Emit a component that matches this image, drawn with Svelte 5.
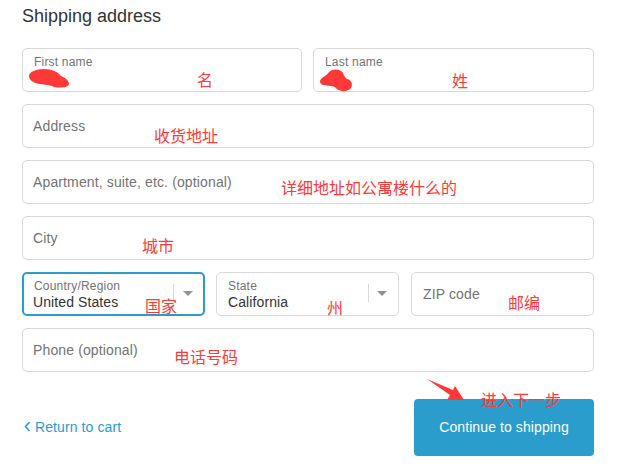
<script>
  const notes = [
    { text: '名', cls: 'n1' },
    { text: '姓', cls: 'n2' },
    { text: '收货地址', cls: 'n3' },
    { text: '详细地址如公寓楼什么的', cls: 'n4' },
    { text: '城市', cls: 'n5' },
    { text: '国家', cls: 'n6' },
    { text: '州', cls: 'n7' },
    { text: '邮编', cls: 'n8' },
    { text: '电话号码', cls: 'n9' },
    { text: '进入下一步', cls: 'n10' }
  ];
</script>

<main class="page">
  <h2>Shipping address</h2>

  <form class="fields">
    <div class="row two">
      <div class="field filled"><span class="label">First name</span></div>
      <div class="field filled"><span class="label">Last name</span></div>
    </div>
    <div class="field"><span class="ph">Address</span></div>
    <div class="field"><span class="ph">Apartment, suite, etc. (optional)</span></div>
    <div class="field"><span class="ph">City</span></div>
    <div class="row three">
      <div class="field select focus">
        <div class="stack"><span class="label">Country/Region</span><span class="value">United States</span></div>
        <span class="sep"></span><span class="caret"></span>
      </div>
      <div class="field select">
        <div class="stack"><span class="label">State</span><span class="value">California</span></div>
        <span class="sep"></span><span class="caret"></span>
      </div>
      <div class="field zip"><span class="ph">ZIP code</span></div>
    </div>
    <div class="field"><span class="ph">Phone (optional)</span></div>
  </form>

  <div class="actions">
    <a class="back" href="#cart">
      <svg width="7" height="11" viewBox="0 0 7 11" aria-hidden="true"><path d="M5.5 1 1.5 5.5 5.5 10" fill="none" stroke="#2a9dcc" stroke-width="1.6"/></svg>
      Return to cart
    </a>
    <button type="button">Continue to shipping</button>
  </div>

  <svg class="ink" width="639" height="467" viewBox="0 0 639 467" aria-hidden="true">
    <path d="M29 76 C29 72 36 69 44 69 C52 69 58 72 61 76 C66 78 69 81 69 84 C68 88 60 88 54 87 C49 84 41 85 35 83 C31 81 29 79 29 76Z" fill="#ff3838"/>
    <path d="M320 81 C321 77 327 76 329 72 C333 68 341 69 343 73 C344 76 345 77 347 79 C352 80 353 85 351 88 C348 92 341 92 337 89 C334 85 328 86 324 85 C321 85 320 83 320 81Z" fill="#ff3838"/>
    <path d="M427 379 L453 390 L455 386 L464 400 L447 400 L450 395Z" fill="#ff3838"/>
  </svg>

  {#each notes as n}
    <span class="note {n.cls}">{n.text}</span>
  {/each}
</main>

<style>
  :global(body) {
    margin: 0;
    background: #fff;
  }
  .page {
    position: relative;
    width: 639px;
    height: 467px;
    padding: 6px 45px 0 22px;
    box-sizing: border-box;
    overflow: hidden;
    font-family: "Liberation Sans", Arial, sans-serif;
    color: #333;
  }
  h2 {
    margin: 0 0 22px;
    font-size: 18px;
    line-height: 20px;
    font-weight: 400;
    color: #333;
  }
  .fields {
    display: flex;
    flex-direction: column;
    gap: 12px;
  }
  .row {
    display: grid;
    column-gap: 11px;
  }
  .two { grid-template-columns: 280px 1fr; }
  .three { grid-template-columns: 183px 183px 1fr; }
  .zip { margin-left: 1px; }
  .zip .ph { margin-left: 1px; }
  .field {
    height: 44px;
    box-sizing: border-box;
    border: 1px solid #d9d9d9;
    border-radius: 5px;
    background: #fff;
    padding: 0 10px;
    display: flex;
    align-items: center;
    font-size: 14px;
  }
  .ph {
    color: #737373;
    font-size: 14px;
    letter-spacing: 0.13px;
    position: relative;
    top: -0.5px;
  }
  .filled {
    align-items: flex-start;
    padding: 6px 11px 0;
  }
  .label {
    font-size: 12px;
    line-height: 15px;
    letter-spacing: 0.2px;
    color: #737373;
  }
  .select { padding: 2px 0 0 11px; }
  .stack {
    flex: 1;
    display: flex;
    flex-direction: column;
    min-width: 0;
  }
  .value {
    font-size: 14px;
    line-height: 17px;
    letter-spacing: 0.1px;
    color: #333;
  }
  .sep {
    width: 1px;
    height: 18px;
    background: #d9d9d9;
    margin: -4px 8px 0 0;
  }
  .caret {
    width: 0;
    height: 0;
    border-left: 5px solid transparent;
    border-right: 5px solid transparent;
    border-top: 5px solid #919191;
    margin: -4px 11px 0 0;
  }
  .focus {
    border: 2px solid #2a9dcc;
    padding-left: 9px;
  }
  .focus .stack { margin-left: 1px; }
  .focus .value { margin-left: -1px; }
  .focus .sep { margin-right: 9px; }
  .focus .caret { margin-right: 10px; }
  .actions {
    display: flex;
    justify-content: space-between;
    align-items: center;
    margin-top: 27px;
  }
  .back {
    display: flex;
    align-items: center;
    gap: 4px;
    padding: 0 0 2px 2px;
    color: #2a9dcc;
    font-size: 14px;
    letter-spacing: 0.1px;
    text-decoration: none;
  }
  button {
    width: 180px;
    height: 57px;
    border: 0;
    border-radius: 4px;
    padding: 0 0 2px;
    background: #2a9dcc;
    color: #fff;
    font: 14px "Liberation Sans", Arial, sans-serif;
    letter-spacing: 0.1px;
  }
  .ink {
    position: absolute;
    left: 0;
    top: 0;
    pointer-events: none;
  }
  .note {
    position: absolute;
    font-family: "Noto Sans CJK SC", sans-serif;
    font-size: 16px;
    line-height: 18px;
    color: #ff3838;
    white-space: nowrap;
  }
  .n1 { left: 197px; top: 70px; }
  .n2 { left: 452px; top: 71px; }
  .n3 { left: 154px; top: 126px; }
  .n4 { left: 281px; top: 178px; }
  .n5 { left: 142px; top: 236px; }
  .n6 { left: 145px; top: 296px; }
  .n7 { left: 327px; top: 298px; }
  .n8 { left: 508px; top: 293px; }
  .n9 { left: 174px; top: 347px; }
  .n10 { left: 481px; top: 390px; }
</style>
